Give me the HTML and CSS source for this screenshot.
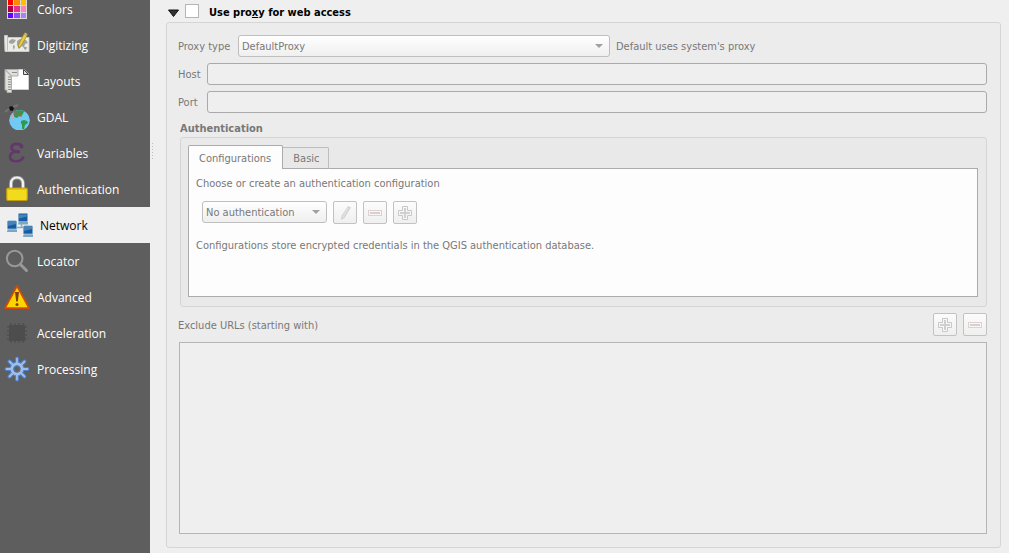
FILE: index.html
```html
<!DOCTYPE html>
<html lang="en">
<head>
<meta charset="utf-8">
<title>Options - Network</title>
<link rel="stylesheet" href="styles.css">
</head>
<body>
<div class="window">
  <nav class="sidebar" aria-label="Option pages">
    <a class="item" href="#colors">
      <svg class="icon" viewBox="0 0 26 26"><rect x="3" y="0" width="20" height="23" fill="#d9d9d9"/><g><rect x="4" y="4" width="5" height="5" fill="#f00"/><rect x="10" y="4" width="6" height="5" fill="#ff8c00"/><rect x="17" y="4" width="5" height="5" fill="#ffc000"/><rect x="4" y="10" width="5" height="6" fill="#b1003f"/><rect x="10" y="10" width="6" height="6" fill="#e8308f"/><rect x="17" y="10" width="5" height="6" fill="#ff80c0"/><rect x="4" y="17" width="5" height="5" fill="#6a00ff"/><rect x="10" y="17" width="6" height="5" fill="#904cff"/><rect x="17" y="17" width="5" height="5" fill="#a880f8"/></g></svg>
      <span class="item-text">Colors</span></a>
    <a class="item" href="#digitizing">
      <svg class="icon" viewBox="0 0 26 26"><path d="M.5 3.500h3v2h21.500v14H1z" fill="#ebebe8" stroke="#c9c9c7"/><path d="M3.500 4v14.500" stroke="#bdbdbb"/><path d="M5 9l3-2 4 1-2 3-2 1-3-1zM9 13l2 1-1 4-1-2zM13 9l3-2 6 1 2 3-3 1-1 4-2-2-3 3-2-4zM20 15l3 0-1 3-2-1z" fill="#a2a39f"/><path d="M20 2l3 1.500-6 10.500-2.500 2 .2-3.500z" fill="#e9cf45" stroke="#a98d25" stroke-width=".8"/><path d="M20 2l1-1.500 2.500 1.500-.7 1.500z" fill="#d4b08a"/></svg>
      <span class="item-text">Digitizing</span></a>
    <a class="item" href="#layouts">
      <svg class="icon" viewBox="0 0 26 26"><path d="M7 1.500h13l4.500 4.500V21.500H7z" fill="#fff" stroke="#cfcfcd"/><path d="M19.500 1.500v5h5z" fill="#ddd" stroke="#454545"/><path d="M1 1.500h13v6.500H7.500v16.500H3V22H1z" fill="#dfdfdb" stroke="#adada9"/><path d="M1 1.500l6.500 6.500" stroke="#92928e"/><path d="M4 9h3M4 11.500h3M4 14h3M4 16.500h3M4 19h3M4 21.500h3M8 4.500h5" stroke="#8e8e8a" fill="none"/></svg>
      <span class="item-text">Layouts</span></a>
    <a class="item" href="#gdal">
      <svg class="icon" viewBox="0 0 26 26"><circle cx="15.500" cy="16.200" r="10.300" fill="#72c9f3"/><path d="M10 8l5-2 5 1-1 3-2 2-2 0-2 2-3-1zM17 17l3-1 3 1 1 2-3 2-1 4-2 0 0-4-1-2z" fill="#2d9b4b"/><path d="M9 11l3-4 2 3 3-1-2 3 3 0" fill="none" stroke="#b75a42"/><path d="M9 9l-1 6 3-2" fill="none" stroke="#c8a7c8"/><path d="M1 8l4-3M9 3l5-2M9 6l3 5" stroke="#747474" stroke-width="2"/><path d="M5 3l3-1 2 2-1 3-3-.5z" fill="#111"/></svg>
      <span class="item-text">GDAL</span></a>
    <a class="item" href="#variables">
      <svg class="icon" viewBox="0 0 26 26"><path d="M18 7C17 3 8 2.500 7.500 7.500c0 3 3 4 7 4-5 0-8.500 1.500-8.500 5.500 0 6 12 5.500 13.500-.5" fill="none" stroke="#63366c" stroke-width="2.600"/><circle cx="17.500" cy="6.500" r="1.900" fill="#63366c"/><circle cx="14.500" cy="11.800" r="1.700" fill="#63366c"/></svg>
      <span class="item-text">Variables</span></a>
    <a class="item" href="#authentication">
      <svg class="icon" viewBox="0 0 26 26"><path d="M7 13V7.500C7 -.5 19 -.5 19 7.500V13" fill="none" stroke="#969696" stroke-width="4"/><path d="M7 13V7.500C7 -.5 19 -.5 19 7.500V13" fill="none" stroke="#f4f4f4" stroke-width="2.200"/><rect x="2.700" y="12" width="20.600" height="12.500" rx="1.500" fill="#f0dc1c" stroke="#c49a08" stroke-width="1.200"/><path d="M4 13h18" stroke="#d0a815"/></svg>
      <span class="item-text">Authentication</span></a>
    <a class="item item-current" href="#network" aria-current="page">
      <svg class="icon" viewBox="0 0 26 26"><path d="M9 15.500h8M14.500 12v4" stroke="#88aac8" stroke-width="1.500"/><g id="pc"><rect x=".5" y="9" width="9" height="8" rx="1" fill="#195ba0" stroke="#79a8cc"/><path d="M1 10h8v2L1 14z" fill="#4583bd"/><path d="M.5 17.500h9.500v2.500H0z" fill="#7ba7c6"/></g><use href="#pc" x="11" y="-7.500"/><use href="#pc" x="16" y="5"/></svg>
      <span class="item-text">Network</span></a>
    <a class="item" href="#locator">
      <svg class="icon" viewBox="0 0 26 26"><circle cx="10.700" cy="10.500" r="7.800" fill="none" stroke="#999" stroke-width="2"/><path d="M16.500 16.500l6 6" stroke="#999" stroke-width="3" stroke-linecap="round"/></svg>
      <span class="item-text">Locator</span></a>
    <a class="item" href="#advanced">
      <svg class="icon" viewBox="0 0 26 26"><path d="M13 2L25 24.200H1z" fill="#ffd500" stroke="#d14b08" stroke-width="1.700" stroke-linejoin="round"/><path d="M11 8h4l-1.200 9.500h-1.600z" fill="#7d3f10"/><circle cx="13" cy="20.500" r="1.500" fill="#7d3f10"/></svg>
      <span class="item-text">Advanced</span></a>
    <a class="item" href="#acceleration">
      <svg class="icon" viewBox="0 0 26 26"><path d="M7 3v20M11 3v20M15 3v20M19 3v20M3 7h20M3 11h20M3 15h20M3 19h20" stroke="#505050" stroke-width="1.500"/><rect x="5" y="5" width="16" height="16" fill="#4d4d4d"/></svg>
      <span class="item-text">Acceleration</span></a>
    <a class="item" href="#processing">
      <svg class="icon" viewBox="0 0 26 26"><g stroke="#4a81cc" stroke-width="4" stroke-linecap="round"><path d="M13 2.500v21M2.500 13h21M5.500 5.500l15 15M20.500 5.500l-15 15"/></g><circle cx="13" cy="13" r="7.500" fill="#4a81cc"/><g stroke="#a3bde6" stroke-width="1.800" stroke-linecap="round"><path d="M13 2.500v21M2.500 13h21M5.500 5.500l15 15M20.500 5.500l-15 15"/></g><circle cx="13" cy="13" r="5" fill="#5e5e5e" stroke="#a3bde6" stroke-width="3"/><circle cx="13" cy="13" r="3.200" fill="#5e5e5e" stroke="#4a81cc" stroke-width="1"/></svg>
      <span class="item-text">Processing</span></a>
  </nav>
  <div class="splitter"></div>
  <main class="page">
    <header class="group-header">
      <button class="collapse" type="button" aria-label="Collapse"><svg class="collapse-icon" viewBox="0 0 11 8"><path d="M.5 1h10L5.500 7.500z" fill="#333" stroke="#111"/></svg></button>
      <input class="check" type="checkbox" id="use-proxy">
      <label class="group-title" for="use-proxy">Use pro<u>x</u>y for web access</label>
    </header>
    <section class="group">
      <div class="row">
        <label class="type-label" for="type">Proxy type</label>
        <span class="combo combo-type"><select id="type" disabled><option>DefaultProxy</option></select><svg class="arrow" viewBox="0 0 8 4"><path d="M0 0h8L4 4z" fill="#a0a0a0"/></svg></span>
        <span class="hint">Default uses system's proxy</span>
      </div>
      <div class="row row-field">
        <label class="field-label" for="host">Host</label>
        <input class="field" type="text" id="host" disabled>
      </div>
      <div class="row row-field">
        <label class="field-label" for="port">Port</label>
        <input class="field" type="text" id="port" disabled>
      </div>
      <h2 class="auth-title">Authentication</h2>
      <div class="auth">
        <div class="tabs" role="tablist">
          <button class="tab tab-active" type="button" role="tab" aria-selected="true">Configurations</button>
          <button class="tab" type="button" role="tab" aria-selected="false">Basic</button>
        </div>
        <div class="pane" role="tabpanel">
          <label class="pane-text" for="config">Choose or create an authentication configuration</label>
          <div class="config-row">
            <span class="combo combo-config"><select id="config" disabled><option>No authentication</option></select><svg class="arrow" viewBox="0 0 8 4"><path d="M0 0h8L4 4z" fill="#a0a0a0"/></svg></span>
            <button class="tool" type="button" aria-label="Edit" disabled><svg class="tool-icon" viewBox="0 0 16 16"><path d="M11 1l3 1.500-6.500 10.500L4 15l.5-4z" fill="#d3d5d1"/><path d="M11 3l-5 9" stroke="#e8e9e6"/></svg></button>
            <button class="tool" type="button" aria-label="Remove" disabled><svg class="tool-icon" viewBox="0 0 16 16"><rect x="1.500" y="5.500" width="13" height="5" fill="#f8f6f6" stroke="#ddd2d2"/><path d="M3 8h10" stroke="#dacfcd" stroke-width="2"/></svg></button>
            <button class="tool" type="button" aria-label="Add" disabled><svg class="tool-icon" viewBox="0 0 16 16"><path d="M5.500 1.500h5v4h4v5h-4v4h-5v-4h-4v-5h4z" fill="#f7f7f7" stroke="#c7c9c6"/><path d="M8 3v10M3 8h10" stroke="#ced1cd" stroke-width="2"/></svg></button>
          </div>
          <p class="pane-text">Configurations store encrypted credentials in the QGIS authentication database.</p>
        </div>
      </div>
      <div class="exclude-row">
        <label class="exclude-label" for="exclude">Exclude URLs (starting with)</label>
        <button class="tool" type="button" aria-label="Add URL" disabled><svg class="tool-icon" viewBox="0 0 16 16"><path d="M5.500 1.500h5v4h4v5h-4v4h-5v-4h-4v-5h4z" fill="#f7f7f7" stroke="#c7c9c6"/><path d="M8 3v10M3 8h10" stroke="#ced1cd" stroke-width="2"/></svg></button>
        <button class="tool" type="button" aria-label="Remove URL" disabled><svg class="tool-icon" viewBox="0 0 16 16"><rect x="1.500" y="5.500" width="13" height="5" fill="#f8f6f6" stroke="#ddd2d2"/><path d="M3 8h10" stroke="#dacfcd" stroke-width="2"/></svg></button>
      </div>
      <select class="exclude-list" id="exclude" multiple disabled></select>
    </section>
  </main>
</div>
</body>
</html>
```
FILE: styles.css
```css
* { box-sizing: border-box; }

body {
  margin: 0;
  background: #efefef;
  color: #787878;
  font: 11px/14px "DejaVu Sans Condensed", "DejaVu Sans", sans-serif;
}

button, input, select { font: inherit; color: inherit; }

.window {
  display: flex;
  min-height: 100vh;
  overflow: hidden;
}

/* Sidebar: the list is scrolled a little, so its first entry is cut */
.sidebar {
  flex: 0 0 150px;
  margin-top: -9px;
  background: #5e5e5e;
  font: 12px/16px "Open Sans", "Noto Sans", sans-serif;
}

.item {
  display: flex;
  align-items: center;
  gap: 7px;
  height: 36px;
  padding-left: 4px;
  color: #fff;
  text-decoration: none;
}

.item-current {
  padding-left: 7px;
  background: #efefef;
  color: #000;
}

.item-text { padding-top: 2px; }

.icon { flex: none; width: 26px; height: 26px; }

.splitter {
  flex: none;
  align-self: flex-start;
  width: 1px;
  height: 17px;
  margin: 143px 0 0 2px;
  background: repeating-linear-gradient(#bdbdbd 0 1px, transparent 1px 3px);
}

.page {
  flex: 1;
  display: flex;
  flex-direction: column;
  min-width: 0;
  padding: 0 8px 5px 13px;
}

.group-header {
  display: flex;
  align-items: center;
  height: 22px;
  padding-left: 2px;
}

.collapse {
  display: flex;
  padding: 4px 0 0;
  border: 0;
  background: none;
}

.collapse-icon { width: 11px; height: 8px; }

.check {
  appearance: none;
  width: 14px;
  height: 14px;
  margin: 0 10px 0 6px;
  border: 1px solid #b5b5b5;
  background: #fff;
}

.group-title {
  padding-top: 4px;
  color: #000;
  font-weight: bold;
}

.group {
  flex: 1;
  display: flex;
  flex-direction: column;
  padding: 12px 13px 13px 11px;
  border: 1px solid #d5d5d5;
  border-radius: 3px;
  background: #ececec;
}

.row {
  display: flex;
  align-items: center;
  gap: 6px;
  height: 22px;
}

.row-field { gap: 0; margin-top: 6px; }

.type-label, .field-label, .hint { padding-top: 2px; }

.type-label { width: 54px; }

.field-label { width: 29px; }

.field {
  flex: 1;
  min-width: 0;
  height: 22px;
  border: 1px solid #aaa;
  border-radius: 3px;
  background: #efefef;
}

.combo {
  display: grid;
  align-items: center;
  height: 22px;
  border: 1px solid #bfbfbf;
  border-radius: 3px;
  background: linear-gradient(#fff, #efefef);
}

.combo-type { flex: 0 1 372px; }

.combo-config { flex: 0 1 125px; }

.combo > * { grid-area: 1 / 1; }

.combo select {
  appearance: none;
  width: 100%;
  padding: 2px 16px 0 3px;
  border: 0;
  background: none;
  opacity: 1;
}

.arrow {
  justify-self: end;
  width: 8px;
  height: 4px;
  margin-right: 6px;
  pointer-events: none;
}

.auth-title {
  margin: 9px 0 1px 2px;
  font-size: 11px;
  line-height: 14px;
}

.auth {
  margin-left: 2px;
  padding: 7px 8px 9px 7px;
  border: 1px solid #d5d5d5;
  border-radius: 3px;
  background: #e9e9e9;
}

.tabs {
  display: flex;
  align-items: flex-end;
  height: 24px;
}

.tab {
  height: 22px;
  padding: 2px 9px 0 10px;
  border: 1px solid #bdbdbd;
  border-bottom-color: #ababab;
  border-left: 0;
  border-radius: 0 2px 0 0;
  background: #e8e8e8;
}

.tab-active {
  height: 24px;
  padding: 2px 11px 0 10px;
  border: 1px solid #ababab;
  border-bottom: 0;
  border-radius: 2px 2px 0 0;
  background: #fdfdfd;
}

.tabs::after {
  content: "";
  flex: 1;
  height: 1px;
  background: #ababab;
}

.pane {
  min-height: 128px;
  padding: 8px 7px;
  border: 1px solid #ababab;
  border-top: 0;
  background: #fdfdfd;
}

.pane-text { display: block; margin: 0; }

.config-row {
  display: flex;
  gap: 6px;
  margin: 10px 0 15px 6px;
}

.tool {
  display: grid;
  place-items: center;
  flex: none;
  width: 24px;
  height: 23px;
  padding: 0;
  border: 1px solid #c2c2c2;
  border-radius: 2px;
  background: linear-gradient(#fcfcfc, #efefef);
}

.tool-icon { width: 16px; height: 16px; }

.exclude-row {
  display: flex;
  align-items: center;
  gap: 6px;
  margin: 6px 0;
}

.exclude-label { flex: 1; padding-top: 2px; }

.exclude-list {
  appearance: none;
  flex: 1;
  min-height: 80px;
  margin: 0 0 0 1px;
  border: 1px solid #b5b5b5;
  border-radius: 0;
  background: #efefef;
  opacity: 1;
}
```
